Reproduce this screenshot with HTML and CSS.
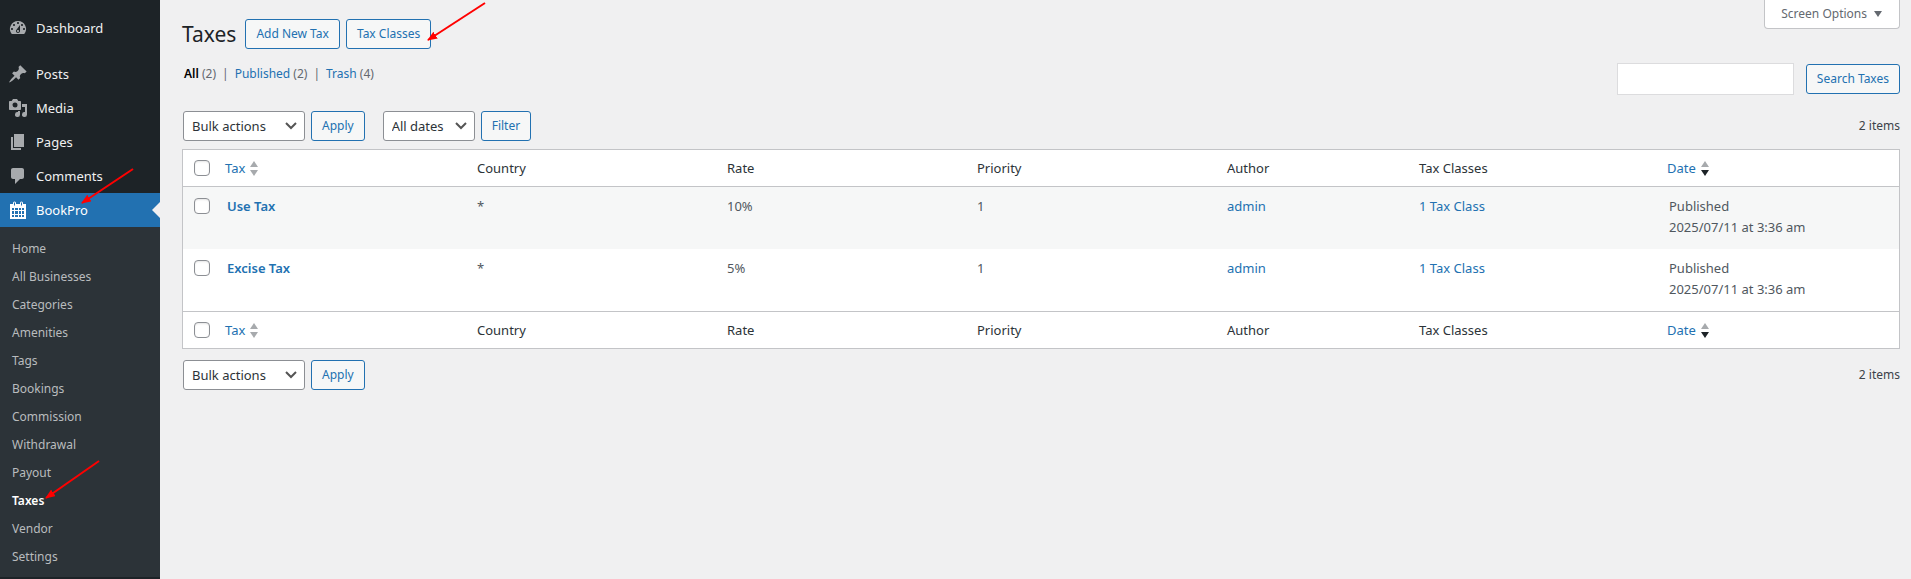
FILE: index.html
```html
<!DOCTYPE html>
<html lang="en-US">
<head>
  <meta charset="UTF-8" />
  <meta name="viewport" content="width=device-width, initial-scale=1.0" />
  <title>Taxes</title>
  <link rel="stylesheet" href="styles.css">
</head>
<body>
  <nav class="sidebar">
    <ul class="menu">
      <li class="menu-first"><a class="menu-link" href="#">
        <svg class="menu-icon" viewBox="0 0 20 20"><path d="M3.76 16h12.48A7.998 7.998 0 0 0 10 3a7.998 7.998 0 0 0-6.24 13zM10 4c.55 0 1 .45 1 1s-.45 1-1 1-1-.45-1-1 .45-1 1-1zM6 6c.55 0 1 .45 1 1s-.45 1-1 1-1-.45-1-1 .45-1 1-1zm8 0c.55 0 1 .45 1 1s-.45 1-1 1-1-.45-1-1 .45-1 1-1zm-5.370 5.550L12 7v6c0 1.100-.9 2-2 2s-2-.9-2-2c0-.57.24-1.080.63-1.450zM4 10c.55 0 1 .45 1 1s-.45 1-1 1-1-.45-1-1 .45-1 1-1zm12 0c.55 0 1 .45 1 1s-.45 1-1 1-1-.45-1-1 .45-1 1-1zm-5 3c0-.55-.45-1-1-1s-1 .45-1 1 .45 1 1 1 1-.45 1-1z"/></svg>
        Dashboard</a></li>
      <li><a class="menu-link" href="#">
        <svg class="menu-icon" viewBox="0 0 20 20"><path d="M10.44 3.02l1.82-1.82 6.36 6.35-1.83 1.82c-1.05-.68-2.48-.57-3.41.36l-.75.75c-.92.93-1.04 2.35-.35 3.41l-1.83 1.82-2.41-2.41-2.8 2.79c-.42.42-3.38 2.71-3.8 2.29s1.86-3.39 2.28-3.81l2.79-2.79L4.1 9.36l1.83-1.82c1.05.69 2.48.57 3.4-.36l.75-.75c.93-.92 1.05-2.35.36-3.41z"/></svg>
        Posts</a></li>
      <li><a class="menu-link" href="#">
        <svg class="menu-icon" viewBox="0 0 20 20"><path fill-rule="evenodd" d="M13 11V4c0-.55-.45-1-1-1h-1.67L9 1H5L3.67 3H2c-.55 0-1 .45-1 1v7c0 .55.45 1 1 1h10c.55 0 1-.45 1-1zM7 4.500a2.500 2.500 0 1 1 0 5 2.500 2.500 0 0 1 0-5z"/><path d="M14 6h5v10.500a2.500 2.500 0 1 1-2-2.450V9h-3zM10 14.050V13h2v3.500a2.500 2.500 0 1 1-2-2.450z"/></svg>
        Media</a></li>
      <li><a class="menu-link" href="#">
        <svg class="menu-icon" viewBox="0 0 20 20"><path d="M6 15V2h10v13H6zm-1 1h8v2H3V5h2v11z"/></svg>
        Pages</a></li>
      <li><a class="menu-link" href="#">
        <svg class="menu-icon" viewBox="0 0 20 20"><path d="M5 2h9c1.100 0 2 .9 2 2v7c0 1.100-.9 2-2 2h-2l-5 5v-5H5c-1.100 0-2-.9-2-2V4c0-1.100.9-2 2-2z"/></svg>
        Comments</a></li>
      <li><a class="menu-link current" href="#">
        <svg class="menu-icon" viewBox="0 0 20 20"><path fill-rule="evenodd" d="M2 4h3V3a1.500 1.500 0 0 1 3 0v1h4V3a1.500 1.500 0 0 1 3 0v1h3v15H2zM6 2.500v3h1v-3zM13 2.500v3h1v-3zM4 8v2h2V8zM7 8v2h3V8zM11 8v2h2V8zM14 8v2h2V8zM4 11v3h2v-3zM7 11v3h3v-3zM11 11v3h2v-3zM14 11v3h2v-3zM4 15v2h2v-2zM7 15v2h3v-2zM11 15v2h2v-2zM14 15v2h2v-2z"/></svg>
        BookPro</a>
        <ul class="submenu">
          <li><a href="#">Home</a></li>
          <li><a href="#">All Businesses</a></li>
          <li><a href="#">Categories</a></li>
          <li><a href="#">Amenities</a></li>
          <li><a href="#">Tags</a></li>
          <li><a href="#">Bookings</a></li>
          <li><a href="#">Commission</a></li>
          <li><a href="#">Withdrawal</a></li>
          <li><a href="#">Payout</a></li>
          <li><a class="active" href="#">Taxes</a></li>
          <li><a href="#">Vendor</a></li>
          <li><a href="#">Settings</a></li>
        </ul>
      </li>
    </ul>
  </nav>

  <main class="content">
    <button class="screen-options" type="button">Screen Options
      <svg class="caret" viewBox="0 0 10 8"><path d="M1 1h8L5 7z"/></svg>
    </button>

    <header class="heading">
      <h1>Taxes</h1>
      <a class="button" href="#">Add New Tax</a>
      <a class="button" href="#">Tax Classes</a>
    </header>

    <div class="filters">
      <ul class="views">
        <li><a class="selected" href="#">All</a> (2)</li>
        <li><a href="#">Published</a> (2)</li>
        <li><a href="#">Trash</a> (4)</li>
      </ul>
      <form class="search">
        <input type="search" aria-label="Search Taxes">
        <button class="button" type="button">Search Taxes</button>
      </form>
    </div>

    <div class="tablenav">
      <select class="bulk" aria-label="Select bulk action"><option>Bulk actions</option></select>
      <button class="button" type="button">Apply</button>
      <select class="dates" aria-label="Filter by date"><option>All dates</option></select>
      <button class="button" type="button">Filter</button>
      <span class="count">2 items</span>
    </div>

    <table class="list">
      <thead>
        <tr>
          <th class="col-check"><input type="checkbox" aria-label="Select all"></th>
          <th class="sortable"><a href="#">Tax <svg class="sort" viewBox="0 0 8 15"><path d="M4 0l4 6H0z"/><path d="M0 9h8l-4 6z"/></svg></a></th>
          <th>Country</th>
          <th>Rate</th>
          <th>Priority</th>
          <th class="col-author">Author</th>
          <th>Tax Classes</th>
          <th class="col-date sortable"><a href="#">Date <svg class="sort" viewBox="0 0 8 15"><path d="M4 0l4 6H0z"/><path class="on" d="M0 9h8l-4 6z"/></svg></a></th>
        </tr>
      </thead>
      <tbody>
        <tr>
          <td class="col-check"><input type="checkbox" aria-label="Select Use Tax"></td>
          <td><a class="row-title" href="#">Use Tax</a></td>
          <td>*</td>
          <td>10%</td>
          <td>1</td>
          <td><a href="#">admin</a></td>
          <td><a href="#">1 Tax Class</a></td>
          <td>Published<br>2025/07/11 at 3:36 am</td>
        </tr>
        <tr>
          <td class="col-check"><input type="checkbox" aria-label="Select Excise Tax"></td>
          <td><a class="row-title" href="#">Excise Tax</a></td>
          <td>*</td>
          <td>5%</td>
          <td>1</td>
          <td><a href="#">admin</a></td>
          <td><a href="#">1 Tax Class</a></td>
          <td>Published<br>2025/07/11 at 3:36 am</td>
        </tr>
      </tbody>
      <tfoot>
        <tr>
          <th class="col-check"><input type="checkbox" aria-label="Select all"></th>
          <th class="sortable"><a href="#">Tax <svg class="sort" viewBox="0 0 8 15"><path d="M4 0l4 6H0z"/><path d="M0 9h8l-4 6z"/></svg></a></th>
          <th>Country</th>
          <th>Rate</th>
          <th>Priority</th>
          <th>Author</th>
          <th>Tax Classes</th>
          <th class="sortable"><a href="#">Date <svg class="sort" viewBox="0 0 8 15"><path d="M4 0l4 6H0z"/><path class="on" d="M0 9h8l-4 6z"/></svg></a></th>
        </tr>
      </tfoot>
    </table>

    <div class="tablenav bottom">
      <select class="bulk" aria-label="Select bulk action"><option>Bulk actions</option></select>
      <button class="button" type="button">Apply</button>
      <span class="count">2 items</span>
    </div>
  </main>

  <!-- red pointer arrows over the page -->
  <svg class="pointers" width="500" height="510">
    <defs>
      <marker id="head" markerUnits="userSpaceOnUse" markerWidth="10" markerHeight="8" refX="9" refY="4" orient="auto"><path d="M0 0l10 4-10 4z"/></marker>
    </defs>
    <path d="M133 169L82 203"/>
    <path d="M99 461L46 498"/>
    <path d="M485 3L428 40"/>
  </svg>
</body>
</html>
```
FILE: styles.css
```css
* {
  box-sizing: border-box;
}
body {
  display: flex;
  min-height: 100vh;
  margin: 0;
  background: #f0f0f1;
  color: #3c434a;
  font-family: "Segoe UI", "Noto Sans", sans-serif;
  font-size: 13px;
  line-height: 18px;
}
a {
  color: #2271b1;
  text-decoration: none;
}
ul {
  list-style: none;
  margin: 0;
  padding: 0;
}

/* sidebar */
.sidebar {
  flex: none;
  width: 160px;
  background: #1d2327;
}
.menu {
  padding-top: 11px;
}
.menu-first {
  margin-bottom: 12px;
}
.menu-link {
  display: flex;
  align-items: center;
  gap: 8px;
  height: 34px;
  padding: 0 8px;
  color: #f0f0f1;
}
.menu-icon {
  width: 20px;
  height: 20px;
  fill: #a7aaad;
}
.current {
  position: relative;
  background: #2271b1;
  color: #fff;
}
.current .menu-icon {
  fill: #fff;
}
.current::after {
  content: "";
  position: absolute;
  right: 0;
  top: 9px;
  border: 8px solid transparent;
  border-left: none;
  border-right-color: #f0f0f1;
}
.submenu {
  padding: 8px 0 6px;
  background: #2c3338;
}
.submenu a {
  display: block;
  padding: 5px 12px;
  color: #b9bcbe;
  font-size: 12px;
}
.submenu .active {
  color: #fff;
  font-weight: 600;
}

/* main column */
.content {
  position: relative;
  flex: 1;
  min-width: 0;
  padding: 19px 11px 20px 22px;
}
.screen-options {
  position: absolute;
  top: 0;
  right: 11px;
  display: flex;
  align-items: center;
  gap: 6px;
  height: 29px;
  padding: 0 16px;
  border: 1px solid #c3c4c7;
  border-top: none;
  border-radius: 0 0 4px 4px;
  background: #fff;
  color: #646970;
  font: inherit;
  font-size: 12px;
}
.caret {
  width: 10px;
  height: 8px;
  fill: #646970;
}
.heading {
  display: flex;
  align-items: center;
  gap: 6px;
}
h1 {
  margin: 0 3px 0 0;
  color: #1d2327;
  font-size: 21px;
  font-weight: 400;
  line-height: 30px;
}
.button {
  height: 30px;
  padding: 0 10px;
  border: 1px solid #2271b1;
  border-radius: 3px;
  background: #f6f7f7;
  color: #2271b1;
  font: inherit;
  font-size: 12px;
  line-height: 28px;
  white-space: nowrap;
}
.filters {
  display: flex;
  justify-content: space-between;
  margin-top: 14px;
}
.views {
  display: flex;
  padding: 2px;
  color: #646970;
  font-size: 12px;
}
.views li + li::before {
  content: "|";
  margin: 0 6px;
}
.views .selected {
  color: #000;
  font-weight: 600;
}
.search {
  display: flex;
  align-items: center;
  gap: 12px;
}
.search input {
  width: 177px;
  height: 32px;
  border: 1px solid #dcdcde;
  background: #fff;
}
.tablenav {
  display: flex;
  align-items: center;
  margin: 16px 0 8px 1px;
}
.tablenav.bottom {
  margin-top: 11px;
}
select {
  height: 30px;
  margin-right: 6px;
  padding: 0 24px 0 8px;
  border: 1px solid #8c8f94;
  border-radius: 3px;
  appearance: none;
  background: #fff url("data:image/svg+xml,%3Csvg xmlns='http://www.w3.org/2000/svg' width='12' height='8'%3E%3Cpath d='M1 1l5 5 5-5' fill='none' stroke='%23555' stroke-width='2'/%3E%3C/svg%3E") no-repeat right 7px center;
  color: #2c3338;
  font: inherit;
}
.bulk {
  width: 122px;
}
.dates {
  width: 92px;
  margin-left: 18px;
}
.count {
  margin-left: auto;
  font-size: 12px;
}

/* tax list */
.list {
  width: 100%;
  table-layout: fixed;
  border: 1px solid #c3c4c7;
  border-spacing: 0;
  background: #fff;
}
th, td {
  padding: 8px 10px;
  text-align: left;
  vertical-align: top;
}
th {
  height: 37px;
  color: #2c3338;
  font-weight: 400;
  line-height: 20px;
}
td {
  height: 62px;
  padding-top: 9px;
  color: #50575e;
  line-height: 21px;
}
thead th {
  border-bottom: 1px solid #c3c4c7;
}
tfoot th {
  border-top: 1px solid #c3c4c7;
}
tbody tr:first-child {
  background: #f6f7f7;
}
.sortable {
  padding-left: 8px;
}
.sortable a {
  display: flex;
  align-items: center;
  gap: 5px;
}
.sort {
  width: 8px;
  height: 15px;
  fill: #a7aaad;
}
.sort .on {
  fill: #1d2327;
}
.row-title {
  font-weight: 600;
}
.col-check {
  width: 34px;
  padding: 10px 0 0 11px;
  line-height: 0;
}
td.col-check {
  padding-top: 11px;
}
.col-author {
  width: 192px;
}
.col-date {
  width: 240px;
}
input[type="checkbox"] {
  width: 16px;
  height: 16px;
  margin: 0;
  border: 1px solid #8c8f94;
  border-radius: 4px;
  appearance: none;
  background: #fff;
  box-shadow: inset 0 1px 2px rgba(0,0,0,0.1);
}

.pointers {
  position: absolute;
  top: 0;
  left: 0;
  pointer-events: none;
}
.pointers > path {
  stroke: #f00;
  stroke-width: 2;
  marker-end: url(#head);
}
.pointers marker path {
  fill: #f00;
}
```
